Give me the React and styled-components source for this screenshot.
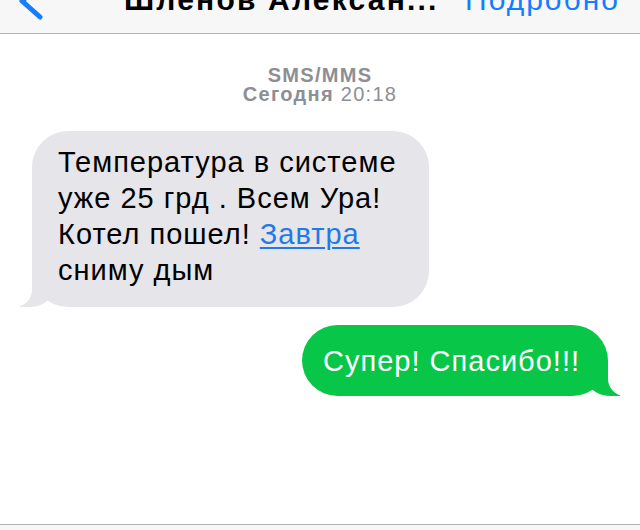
import React from "react";
import styled, { createGlobalStyle } from "styled-components";

const GlobalStyle = createGlobalStyle`
  html, body { margin: 0; padding: 0; background: #ffffff; }
  body { font-family: "Liberation Sans", Arial, sans-serif; -webkit-font-smoothing: antialiased; }
  * { box-sizing: border-box; }
`;

const Screen = styled.div`
  width: 640px;
  height: 530px;
  overflow: hidden;
  display: flex;
  flex-direction: column;
  background: #ffffff;
`;

const NavBar = styled.header`
  flex: none;
  height: 75px;
  margin-top: -41px;
  padding-top: 7px;
  padding-right: 20px;
  display: flex;
  align-items: center;
  background: #f7f7f7;
  border-bottom: 1px solid #b2b2b2;
`;

const BackButton = styled.svg`
  flex: none;
  align-self: flex-start;
  margin-top: 16px;
  margin-left: 18px;
  width: 26px;
  height: 38px;
`;

const Title = styled.div`
  margin-left: 80px;
  font-size: 30px;
  font-weight: 700;
  letter-spacing: 2.2px;
  color: #000;
  white-space: nowrap;
`;

const NavLink = styled.div`
  margin-left: auto;
  font-size: 30px;
  letter-spacing: 2px;
  color: #147efb;
  white-space: nowrap;
`;

const Conversation = styled.main`
  flex: 1;
  display: flex;
  flex-direction: column;
  padding-top: 32px;
`;

const Stamp = styled.div`
  text-align: center;
  font-size: 20px;
  line-height: 19px;
  letter-spacing: 1.3px;
  color: #8e8e93;
`;

const StampLine = styled.div`
  font-weight: ${(p) => (p.$bold ? 700 : 400)};
`;

const Bold = styled.span`
  font-weight: 700;
`;

const Bubble = styled.div`
  position: relative;
  align-self: ${(p) => (p.$me ? "flex-end" : "flex-start")};
  margin-top: ${(p) => p.$top}px;
  margin-left: ${(p) => (p.$me ? 0 : 32)}px;
  margin-right: ${(p) => (p.$me ? 32 : 0)}px;
  padding: ${(p) => p.$pad};
  border-radius: 36px;
  background: ${(p) => (p.$me ? "#08c647" : "#e5e5ea")};
  color: ${(p) => (p.$me ? "#ffffff" : "#000000")};
  font-size: 29px;
  line-height: 36px;
  letter-spacing: 1px;
  white-space: nowrap;

  &::before,
  &::after {
    content: "";
    position: absolute;
    bottom: 0;
    height: 36px;
  }
  &::before {
    ${(p) => (p.$me ? "right: -12px;" : "left: -12px;")}
    width: 36px;
    background: ${(p) => (p.$me ? "#08c647" : "#e5e5ea")};
    ${(p) =>
      p.$me
        ? "border-bottom-left-radius: 26px 24px;"
        : "border-bottom-right-radius: 26px 24px;"}
  }
  &::after {
    ${(p) => (p.$me ? "right: -40px;" : "left: -40px;")}
    width: 40px;
    background: #ffffff;
    ${(p) =>
      p.$me
        ? "border-bottom-left-radius: 17px;"
        : "border-bottom-right-radius: 17px;"}
  }
`;

const Link = styled.span`
  color: #1f7ae8;
  text-decoration: underline;
  text-decoration-thickness: 2px;
  text-underline-offset: 3px;
`;

const Toolbar = styled.footer`
  flex: none;
  height: 6px;
  background: #f7f7f7;
  border-top: 1px solid #b2b2b2;
`;

export default function App() {
  return (
    <>
      <GlobalStyle />
      <Screen>
        <NavBar>
          <BackButton viewBox="0 0 26 38">
            <path
              d="M22 3 L4 19 L22 35"
              fill="none"
              stroke="#147efb"
              strokeWidth="5"
              strokeLinecap="round"
              strokeLinejoin="round"
            />
          </BackButton>
          <Title>Шленов Алексан...</Title>
          <NavLink>Подробно</NavLink>
        </NavBar>
        <Conversation>
          <Stamp>
            <StampLine $bold>SMS/MMS</StampLine>
            <StampLine>
              <Bold>Сегодня</Bold> 20:18
            </StampLine>
          </Stamp>
          <Bubble $top={27} $pad="13px 32px 19px 26px">
            Температура в системе
            <br />
            уже 25 грд . Всем Ура!
            <br />
            Котел пошел! <Link>Завтра</Link>
            <br />
            сниму дым
          </Bubble>
          <Bubble $me $top={18} $pad="18px 28px 17px 21px">
            Супер! Спасибо!!!
          </Bubble>
        </Conversation>
        <Toolbar />
      </Screen>
    </>
  );
}
